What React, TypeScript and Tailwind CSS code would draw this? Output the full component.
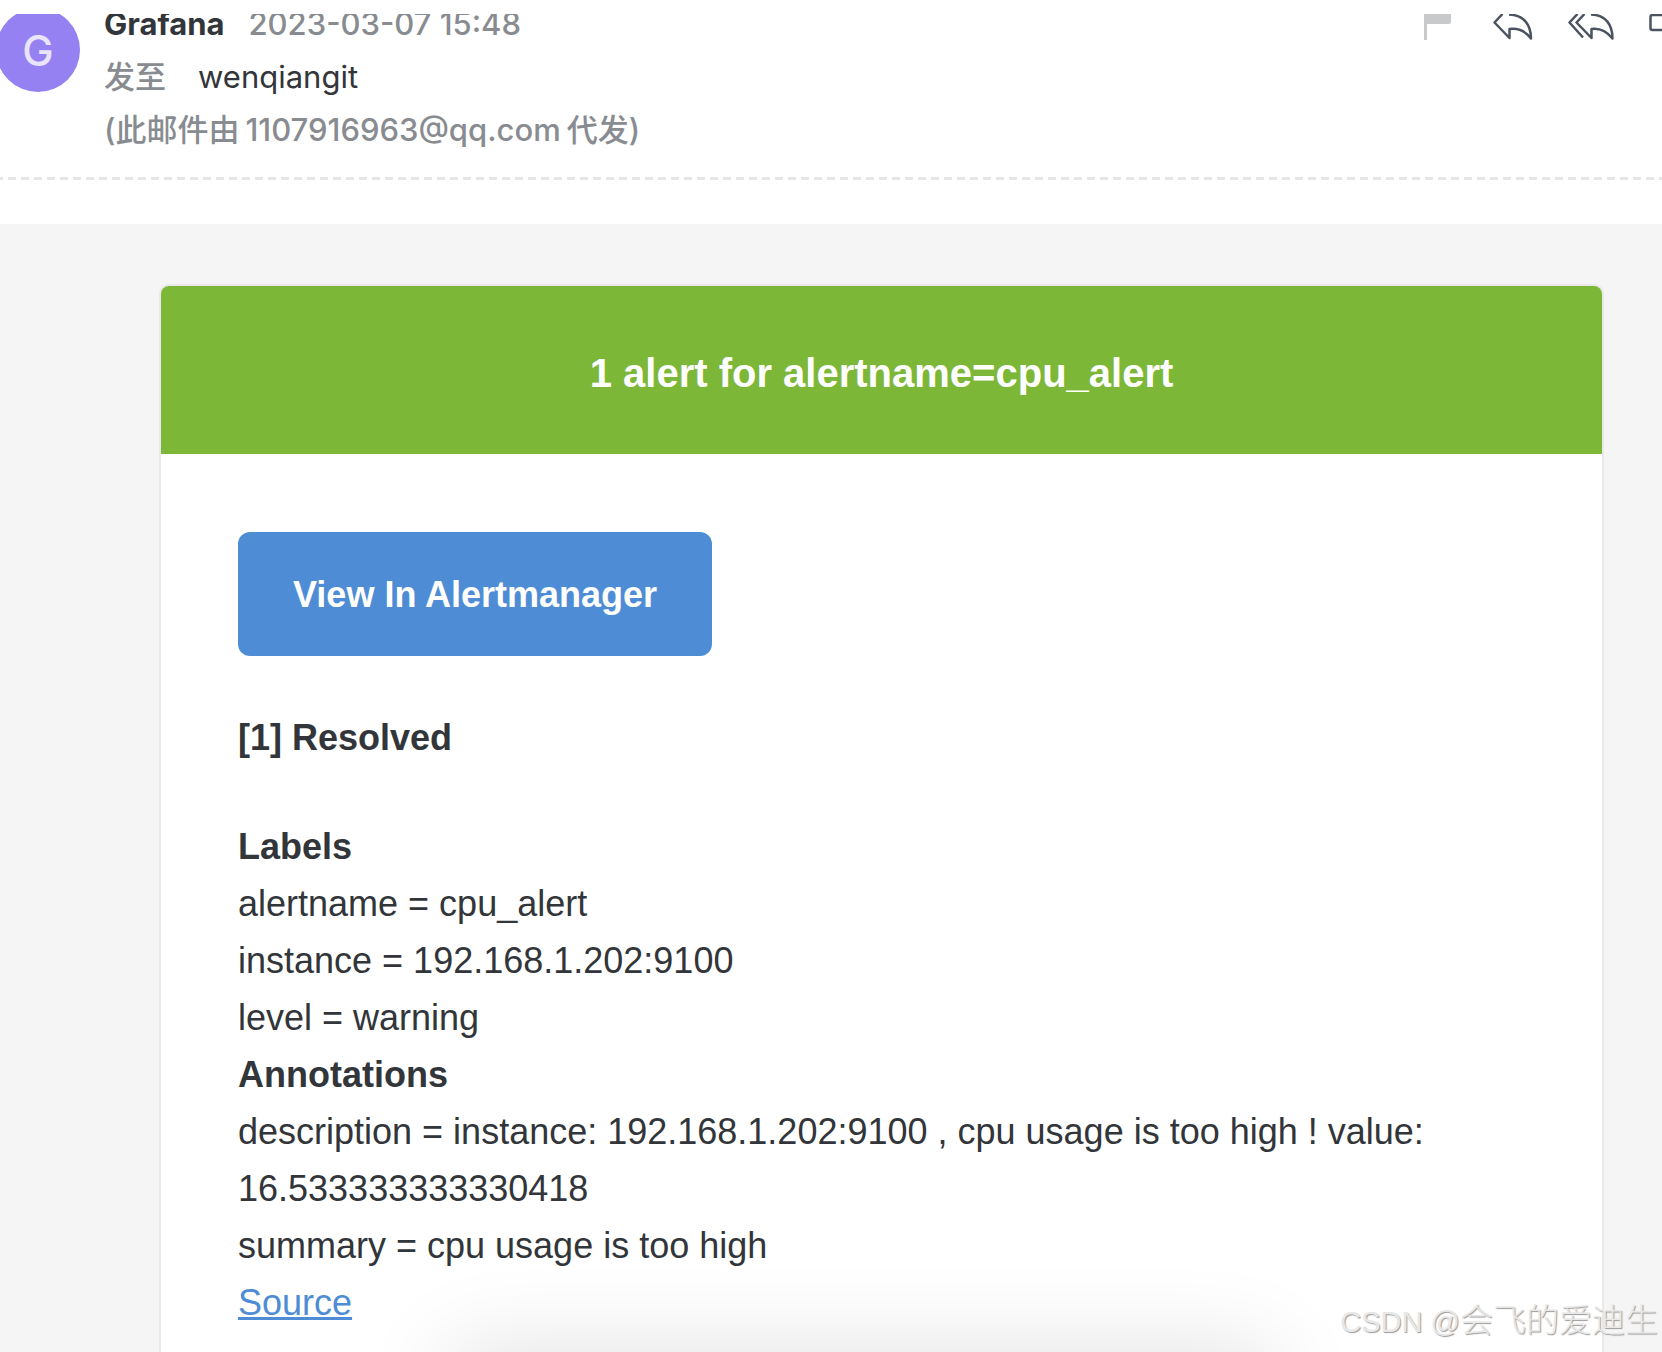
import { ReactNode } from 'react';

interface Field {
  name: string;
  value: string;
}

interface ToolButtonProps {
  label: string;
  children: ReactNode;
}

const LABELS: Field[] = [
  { name: 'alertname', value: 'cpu_alert' },
  { name: 'instance', value: '192.168.1.202:9100' },
  { name: 'level', value: 'warning' },
];

const ANNOTATIONS: Field[] = [
  {
    name: 'description',
    value: 'instance: 192.168.1.202:9100 , cpu usage is too high ! value: 16.533333333330418',
  },
  { name: 'summary', value: 'cpu usage is too high' },
];

const ToolButton = ({ label, children }: ToolButtonProps) => (
  <button type="button" aria-label={label} className="block cursor-pointer">
    {children}
  </button>
);

const Toolbar = () => (
  <div className="flex shrink-0 items-start">
    <ToolButton label="Flag">
      <svg className="mr-[40px]" width="29" height="26" viewBox="0 0 29 26" fill="#c8c9cb">
        <path d="M0 0H27V8Q27 10 25 10H3V26H0Z" />
      </svg>
    </ToolButton>
    <ToolButton label="Reply">
      <svg className="mr-[35px]" width="40" height="26" viewBox="0 0 40 26" fill="none" stroke="#4b5360" strokeWidth="2.5" strokeLinejoin="round">
        <path d="M9.500 0L1.500 8.500L16.500 24V15C24 14 32 16.500 38 24.500C38 11 31 1 16 .500" />
      </svg>
    </ToolButton>
    <ToolButton label="Reply all">
      <svg className="mr-[35px]" width="46" height="26" viewBox="0 0 46 26" fill="none" stroke="#4b5360" strokeWidth="2.5" strokeLinejoin="round">
        <path d="M9.500 0L1.500 8.500L15 23.500M16.500 0L8.500 8.500L23.500 24V15C31 14 38 16.500 44.500 24.500C44.500 11 38 1 23 .500" />
      </svg>
    </ToolButton>
    <ToolButton label="Forward">
      <svg width="13" height="26" viewBox="0 0 13 26" fill="none" stroke="#4b5360" strokeWidth="2.5">
        <path d="M13 1H3.500Q1.500 1 1.500 3V14Q1.500 16 3.500 16H13" />
      </svg>
    </ToolButton>
  </div>
);

const MailHeader = () => (
  <header className="flex h-[163px] items-start overflow-hidden font-[Inter,'Noto_Sans_CJK_SC',sans-serif] text-[31px] leading-[53px] font-medium text-[#888b90]">
    <div className="-mt-[6px] -ml-[4px] flex size-[84px] shrink-0 items-center justify-center rounded-full bg-[#9681f2] text-[42px] text-[#e9e4fd]">
      G
    </div>
    <div className="-mt-[17px] ml-[24px] min-w-0 flex-1">
      <p>
        <span className="font-bold text-[#323539]">Grafana</span>
        <time className="ml-[24px]" dateTime="2023-03-07T15:48">2023-03-07 15:48</time>
      </p>
      <p>
        发至<span className="ml-[32px] font-normal text-[#323539]">wenqiangit</span>
      </p>
      <p>
        (此邮件由<span className="mx-[6px]">1107916963@qq.com</span>代发)
      </p>
    </div>
    <Toolbar />
  </header>
);

const FieldList = ({ title, fields }: { title: string; fields: Field[] }) => (
  <section>
    <h2 className="font-bold">{title}</h2>
    {fields.map((field) => (
      <p key={field.name}>{`${field.name} = ${field.value}`}</p>
    ))}
  </section>
);

const AlertCard = () => (
  <article className="flex-1 rounded-t-[10px] border-2 border-b-0 border-[#e9e9e9] bg-white">
    <h1 className="rounded-t-[8px] bg-[#7db738] px-[77px] pt-[59px] pb-[53px] text-center text-[40px] leading-[56px] font-bold text-white">
      1 alert for alertname=cpu_alert
    </h1>
    <div className="px-[77px] pt-[78px] pb-[20px] text-[36px] leading-[57px] text-[#323539]">
      <a
        href="#alertmanager"
        className="inline-block rounded-[12px] bg-[#4e8dd5] px-[55px] pt-[35px] pb-[33px] align-top leading-[56px] font-bold text-white"
      >
        View In Alertmanager
      </a>
      <p className="mt-[53px] mb-[52px] font-bold">[1] Resolved</p>
      <FieldList title="Labels" fields={LABELS} />
      <FieldList title="Annotations" fields={ANNOTATIONS} />
      <a href="#source" className="text-[#4e8dd5] underline">Source</a>
    </div>
  </article>
);

export default function App() {
  return (
    <div className="relative flex min-h-screen flex-col overflow-hidden bg-white pt-[14px] font-['Liberation_Sans',sans-serif]">
      <MailHeader />
      <div className="h-[3px] bg-[repeating-linear-gradient(90deg,#e6e6e6_0_3px,transparent_3px_8px,#e6e6e6_8px_13px)]" />
      <main className="mt-[44px] flex flex-1 flex-col bg-[#f5f5f5] pt-[60px] pr-[58px] pl-[159px]">
        <AlertCard />
      </main>

      {/* shadow of the floating bar below the fold */}
      <div className="pointer-events-none absolute right-[410px] -bottom-[60px] left-[470px] h-[40px] shadow-[0_0_90px_20px_rgba(0,0,0,0.13)]" />
      <p className="pointer-events-none absolute right-[4px] bottom-[6px] font-['Liberation_Sans','Noto_Sans_CJK_SC',sans-serif] text-[29px] leading-[48px] font-light text-[#e8e8e8] [text-shadow:1px_1px_1px_#999]">
        CSDN @<span className="text-[33px]">会飞的爱迪生</span>
      </p>
    </div>
  );
}
